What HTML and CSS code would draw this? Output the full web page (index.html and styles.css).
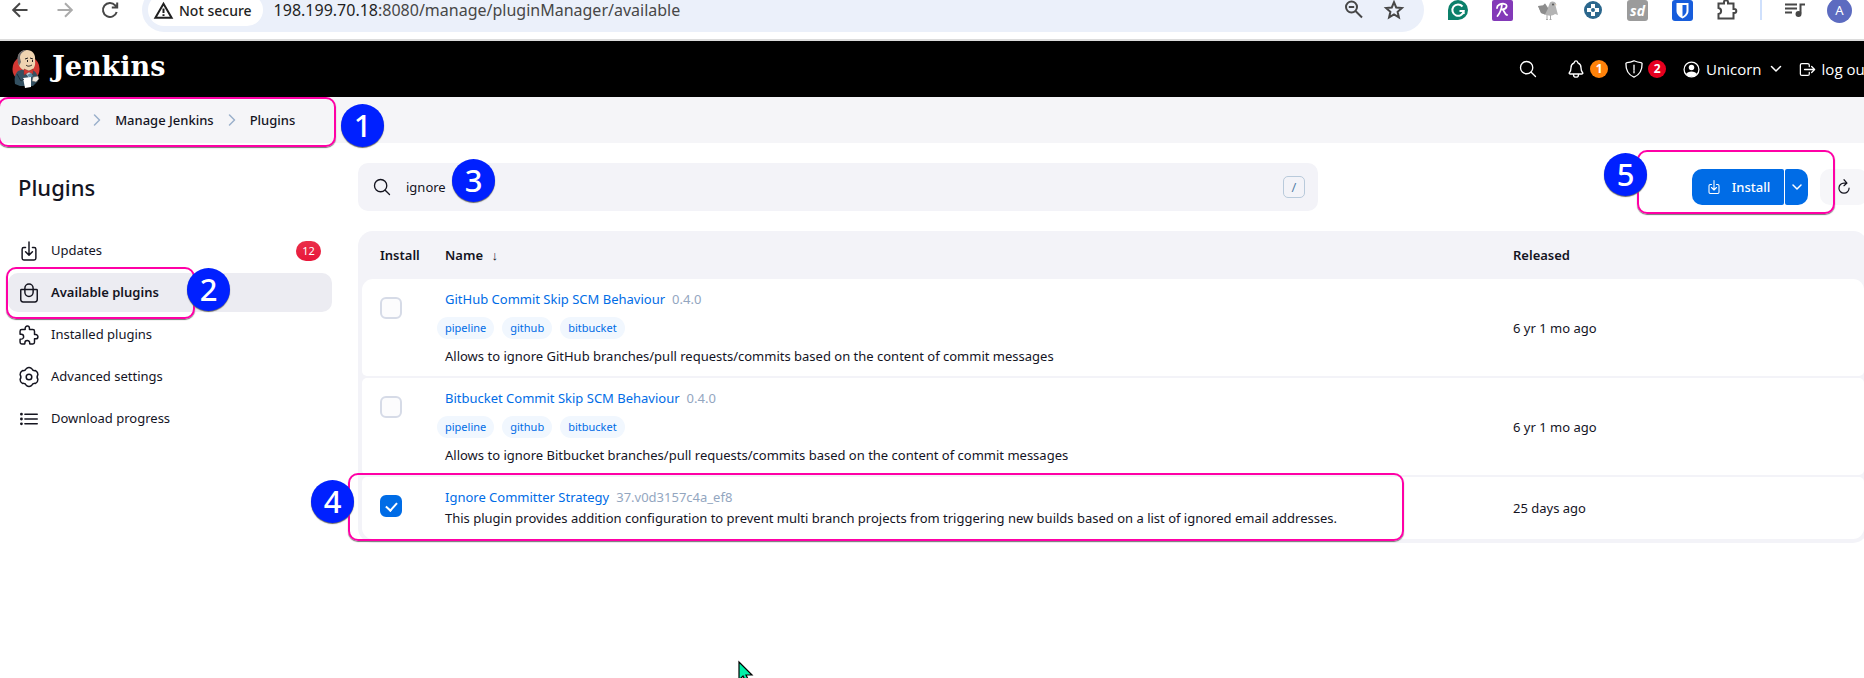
FILE: index.html
```html
<!DOCTYPE html>
<html lang="en">
<head>
<meta charset="utf-8">
<title>Plugins - Jenkins</title>
<link rel="stylesheet" href="styles.css">
</head>
<body>
<div class="toolbar">
  <div class="toolbar-row">
    <div class="nav-buttons">
      <button class="icon-button" aria-label="Back"><svg width="20" height="20" viewBox="0 0 20 20" class="line tool"><path d="M17.500 10H3.500M10 3.300L3.200 10l6.800 6.700"/></svg></button>
      <button class="icon-button faded" aria-label="Forward"><svg width="20" height="20" viewBox="0 0 20 20" class="line tool"><path d="M2.500 10h14M10 3.300l6.800 6.700-6.800 6.700"/></svg></button>
      <button class="icon-button" aria-label="Reload"><svg width="20" height="20" viewBox="0 0 20 20" class="line tool"><path d="M16.700 12a7 7 0 1 1-1.500-6.700L17 7.200M17.200 2.500v5h-5.400"/></svg></button>
    </div>
    <div class="omnibox">
      <button class="security-chip"><svg width="19" height="17" viewBox="0 0 19 17" class="line tool"><path d="M9.500 1.800L17.600 15.700H1.400zM9.500 6.500v4.500M9.500 12.200v1.800"/></svg>Not secure</button>
      <span class="url">198.199.70.18<span class="url-path">:8080/manage/pluginManager/available</span></span>
      <button class="icon-button zoom-button" aria-label="Zoom"><svg width="20" height="20" viewBox="0 0 20 20" class="line tool"><circle cx="7.500" cy="7" r="5.500"/><path d="M11.500 11l6.500 6.500M4.800 7h5.400"/></svg></button>
      <button class="icon-button" aria-label="Bookmark"><svg width="20" height="20" viewBox="0 0 20 20" class="line star"><path d="M10 2.200l2.200 5.300 5.700.5-4.300 3.800 1.300 5.600-4.900-3-4.900 3 1.300-5.600L2.100 8l5.700-.5z"/></svg></button>
    </div>
    <div class="extensions">
      <button class="icon-button" aria-label="Grammar"><svg width="20" height="20" viewBox="0 0 20 20"><path d="M0 20V10a10 10 0 1 1 10 10z" fill="#0b806a"/><path d="M14.500 6.500A5.700 5.700 0 1 0 15.700 11H11.500M15.700 10.500V14" fill="none" stroke="#fff" stroke-width="2"/></svg></button>
      <button class="icon-button" aria-label="R extension"><svg width="21" height="21" viewBox="0 0 21 21"><rect width="21" height="21" rx="2" fill="#8339b8"/><path d="M5 8c0-3 4-4.500 7-4.200 4 .4 3.400 5-1.500 5.700 2 1 2 5 4.500 5.500M10 4.500C9.500 9 8 13 5.500 16" fill="none" stroke="#fff" stroke-width="1.800" stroke-linecap="round"/></svg></button>
      <button class="icon-button" aria-label="Bird extension"><svg width="22" height="20" viewBox="0 0 22 20"><path d="M1 6l5-.5 2-2 3 4 2-5c2-2 5-1 6 1l-.5 2L21 15l-3-1c-3 3-9 1-9 1l-5-2z" fill="#b4b4b4"/><path d="M1 6l5-.5 2-2 3 5-3 6-4-1.500z" fill="#8c8c8c"/><path d="M10 15v4.500M13.500 15v4.500M9 19.500h2M12.500 19.500h2" stroke="#aaa" stroke-width="1"/><circle cx="16" cy="4.500" r="1" fill="#555"/><path d="M18.500 4l1.500 1-1.500.5" fill="#e6c9a8"/></svg></button>
      <button class="icon-button" aria-label="Blue extension"><svg width="20" height="20" viewBox="0 0 20 20"><circle cx="10" cy="10" r="9" fill="#2b678d"/><path d="M8 4h4v4h4v4h-4v4H8v-4H4V8h4z" fill="#fff"/><circle cx="10" cy="10" r="2" fill="#2b678d"/></svg></button>
      <button class="icon-button sd" aria-label="SD extension">sd</button>
      <button class="icon-button" aria-label="Password manager"><svg width="21" height="21" viewBox="0 0 21 21"><rect width="21" height="21" rx="3" fill="#175ddc"/><path d="M4.500 3h12v8c0 4-4 6.500-6 7.500-2-1-6-3.500-6-7.500z" fill="#fff"/><path d="M10.500 5h4v6c0 2.500-2 4.300-4 5.500z" fill="#175ddc"/></svg></button>
      <button class="icon-button" aria-label="Extensions"><svg width="21" height="22" viewBox="0 0 21 22" class="line tool"><path d="M1.500 4.500H7V3.200a2 2 0 0 1 4 0v1.300h5.500V10h.8a2 2 0 0 1 0 4h-.8v5.500h-15V15c3.500-.5 3.500-5.500 0-6z"/></svg></button>
      <span class="divider"></span>
      <button class="icon-button" aria-label="Media"><svg width="20" height="20" viewBox="0 0 20 20" class="line tool"><path d="M0 4.500h12M0 8.500h12M0 12.500h7M15.500 13.500V4.500H20"/><circle cx="13.500" cy="14" r="2" fill="currentColor"/></svg></button>
      <button class="icon-button avatar" aria-label="Profile">A</button>
    </div>
  </div>
</div>

<header class="header">
  <a href="#" class="brand">
    <svg width="28" height="40" viewBox="0 0 28 40">
      <circle cx="14" cy="20" r="13.500" fill="#d33833"/>
      <path d="M3 35c-1-6 0-10 3-13l6-2 8 1c5 2 6 6 6 11l-5 5H8z" fill="#335061"/>
      <path d="M6 11C5 4 10 1 15 1s9 4 8 10c1 7-2 11-7 11S7 19 6 13z" fill="#efd3b0"/>
      <path d="M6 14C4 6 8 1 14 1c-3 2-6 3-6 8l1 4-2 4z" fill="#6d6b6d"/>
      <path d="M13 10l3-1M18 9l3 1M14 16c2 2 4 1 6 0" stroke="#221f1f" fill="none"/>
      <path d="M15 12h1M20 12h1" stroke="#221f1f" stroke-width="2"/>
      <path d="M12 22l5 7 4-7z" fill="#c9d3da"/>
      <path d="M12 20l5 2 4-2v5l-4-2-5 3z" fill="#d33833" stroke="#81302b" stroke-width=".5"/>
      <path d="M15 26l4-2 2 3-3 2z" fill="#5b8aa3"/>
      <path d="M11 29l8-1v10l-6 1z" fill="#fff"/>
      <path d="M21 28l5-1 1 3-3 3-4-1z" fill="#efe8df" stroke="#555" stroke-width=".5"/>
      <path d="M5 25l4 7 3-2" fill="none" stroke="#1d2f3a"/>
    </svg>
    <span class="wordmark">Jenkins</span>
  </a>
  <div class="header-tools">
    <button class="head-button search-tool" aria-label="Search"><svg width="20" height="20" viewBox="0 0 512 512" class="line ion"><circle cx="221" cy="221" r="157"/><path d="M338 338l110 110"/></svg></button>
    <button class="head-button bell-tool" aria-label="Notifications"><svg width="20" height="20" viewBox="0 0 512 512" class="line ion"><path d="M427.700 351.400C403 321 384 305 384 222.500 384 147 345.500 120 313.700 107c-4.200-1.700-8.200-5.700-9.500-10C298.600 78.200 283.200 48 256 48s-42.600 30.200-48.100 49c-1.300 4.400-5.300 8.300-9.500 10C166.600 120.100 128 147 128 222.500 128 305 109 321 84.300 351.400 74 364 83.200 384 101.200 384h309.700c18 0 27-20.100 16.800-32.600zM320 384v16a64 64 0 01-128 0v-16"/></svg><span class="count orange">1</span></button>
    <button class="head-button shield-tool" aria-label="Security warnings"><svg width="20" height="20" viewBox="0 0 512 512" class="line ion"><path d="M463 112c-4-12-14-19-28-21-95-12-125-25-168-42-8-2-14-2-22 0-44 17-73 30-168 42-14 2-24 9-28 21-5 210 75 300 207 352 132-52 212-142 207-352zM256 155v130M256 320v32"/></svg><span class="count red">2</span></button>
    <a href="#" class="head-link user"><svg width="19" height="19" viewBox="0 0 512 512"><circle cx="256" cy="256" r="200" fill="none" stroke="currentColor" stroke-width="34"/><circle cx="256" cy="205" r="74" fill="currentColor"/><path d="M110 375c40-90 252-90 292 0-60 90-232 90-292 0z" fill="currentColor"/></svg>Unicorn</a>
    <button class="head-button caret" aria-label="User menu"><svg width="12" height="12" viewBox="0 0 12 12" class="line"><path d="M1.500 3.500L6 8l4.500-4.500"/></svg></button>
    <a href="#" class="head-link"><svg width="19" height="19" viewBox="0 0 512 512" class="line ion"><path d="M304 336v40a40 40 0 01-40 40H104a40 40 0 01-40-40V136a40 40 0 0140-40h152c22 0 48 18 48 40v40M368 336l80-80-80-80M176 256h256"/></svg>log out</a>
  </div>
</header>

<nav class="breadcrumbs" aria-label="Breadcrumb">
  <a href="#">Dashboard</a>
  <svg width="8" height="12" viewBox="0 0 8 12" class="line"><path d="M1.500 1l5 5-5 5"/></svg>
  <a href="#">Manage Jenkins</a>
  <svg width="8" height="12" viewBox="0 0 8 12" class="line"><path d="M1.500 1l5 5-5 5"/></svg>
  <a href="#">Plugins</a>
</nav>

<div class="page">
  <aside class="sidebar">
    <h1>Plugins</h1>
    <nav class="tasks" aria-label="Plugin manager">
      <a href="#" class="task"><svg width="22" height="22" viewBox="0 0 512 512" class="line ion"><path d="M336 176h40a40 40 0 0140 40v208a40 40 0 01-40 40H136a40 40 0 01-40-40V216a40 40 0 0140-40h40M176 272l80 80 80-80M256 48v288"/></svg>Updates<span class="badge">12</span></a>
      <a href="#" class="task active"><svg width="22" height="22" viewBox="0 0 512 512" class="line ion"><path d="M80 176a16 16 0 00-16 16v216c0 30.240 25.760 56 56 56h272c30.240 0 56-24.510 56-54.750V192a16 16 0 00-16-16zM160 176v-32a96 96 0 01192 0v32M160 176v64a96 96 0 00192 0v-64"/></svg>Available plugins</a>
      <a href="#" class="task"><svg width="22" height="22" viewBox="0 0 512 512" class="line ion"><path d="M413.660 246.100H386a2 2 0 01-2-2v-77.240A38.860 38.860 0 00345.140 128H267.900a2 2 0 01-2-2V98.340c0-27.140-21.500-49.860-48.640-50.330a49.530 49.530 0 00-50.400 49.510V126a2 2 0 01-2 2H87.620A39.740 39.740 0 0048 167.620V238a2 2 0 002 2h26.910c29.370 0 53.680 25.480 54.090 54.850.420 29.870-23.510 57.150-53.290 57.150H50a2 2 0 00-2 2v70.380A39.740 39.740 0 0087.620 464H158a2 2 0 002-2v-20.930c0-30.280 24.750-56.350 55-57.060 30.100-.700 57 20.310 57 50.280V462a2 2 0 002 2h71.140A38.860 38.860 0 00384 425.140v-78a2 2 0 012-2h28.480c27.630 0 49.520-22.670 49.520-50.400s-23.200-48.640-50.340-48.640z"/></svg>Installed plugins</a>
      <a href="#" class="task"><svg width="22" height="22" viewBox="-1 -1 22 22" class="line gear"><path d="M7.600 1.300Q10 -.2 12.400 1.300Q13.600 4 16.600 3.600Q19 5 18.900 7.600Q17.300 10 18.900 12.400Q19 15 16.600 16.400Q13.600 16 12.400 18.700Q10 20.200 7.600 18.700Q6.400 16 3.400 16.400Q1 15 1.100 12.400Q2.700 10 1.100 7.600Q1 5 3.400 3.600Q6.400 4 7.600 1.300z"/><circle cx="10" cy="10" r="2.800"/></svg>Advanced settings</a>
      <a href="#" class="task"><svg width="22" height="22" viewBox="0 0 512 512" class="line ion"><path d="M160 144h288M160 256h288M160 368h288"/><circle cx="80" cy="144" r="16"/><circle cx="80" cy="256" r="16"/><circle cx="80" cy="368" r="16"/></svg>Download progress</a>
    </nav>
  </aside>

  <main class="main">
    <div class="app-bar">
      <label class="search">
        <svg width="20" height="20" viewBox="0 0 512 512" class="line ion"><circle cx="221" cy="221" r="157"/><path d="M338 338l110 110"/></svg>
        <input type="search" value="ignore" aria-label="Search available plugins">
        <kbd>/</kbd>
      </label>
      <div class="actions">
        <div class="split">
          <button class="install"><svg width="16" height="16" viewBox="0 0 512 512" class="line ion"><path d="M336 176h40a40 40 0 0140 40v208a40 40 0 01-40 40H136a40 40 0 01-40-40V216a40 40 0 0140-40h40M176 272l80 80 80-80M256 48v288"/></svg>Install</button>
          <button class="more" aria-label="More install options"><svg width="12" height="12" viewBox="0 0 12 12" class="line"><path d="M2 4l4 4 4-4"/></svg></button>
        </div>
        <button class="refresh" aria-label="Refresh"><svg width="18" height="18" viewBox="0 0 512 512" class="line ion"><path d="M400 288a144 144 0 11-144-144h70M256 50l85 94-85 76"/></svg></button>
      </div>
    </div>

    <div class="table-frame">
      <table>
        <thead>
          <tr><th class="col-install">Install</th><th>Name <span class="sort">↓</span></th><th class="col-released">Released</th></tr>
        </thead>
        <tbody>
          <tr>
            <td class="pick"><input type="checkbox" aria-label="GitHub Commit Skip SCM Behaviour"></td>
            <td>
              <div><a href="#">GitHub Commit Skip SCM Behaviour</a><span class="version">0.4.0</span></div>
              <div class="tags"><a href="#">pipeline</a><a href="#">github</a><a href="#">bitbucket</a></div>
              <div>Allows to ignore GitHub branches/pull requests/commits based on the content of commit messages</div>
            </td>
            <td class="released">6 yr 1 mo ago</td>
          </tr>
          <tr>
            <td class="pick"><input type="checkbox" aria-label="Bitbucket Commit Skip SCM Behaviour"></td>
            <td>
              <div><a href="#">Bitbucket Commit Skip SCM Behaviour</a><span class="version">0.4.0</span></div>
              <div class="tags"><a href="#">pipeline</a><a href="#">github</a><a href="#">bitbucket</a></div>
              <div>Allows to ignore Bitbucket branches/pull requests/commits based on the content of commit messages</div>
            </td>
            <td class="released">6 yr 1 mo ago</td>
          </tr>
          <tr>
            <td class="pick"><input type="checkbox" checked aria-label="Ignore Committer Strategy"></td>
            <td>
              <div><a href="#">Ignore Committer Strategy</a><span class="version">37.v0d3157c4a_ef8</span></div>
              <div>This plugin provides addition configuration to prevent multi branch projects from triggering new builds based on a list of ignored email addresses.</div>
            </td>
            <td class="released">25 days ago</td>
          </tr>
        </tbody>
      </table>
    </div>
  </main>
</div>

<div class="mark mark-1"></div>
<div class="mark mark-2"></div>
<div class="mark mark-4"></div>
<div class="mark mark-5"></div>
<span class="step step-1">1</span>
<span class="step step-2">2</span>
<span class="step step-3">3</span>
<span class="step step-4">4</span>
<span class="step step-5">5</span>
<svg class="cursor" width="15" height="22" viewBox="0 0 15 22"><path d="M1 1v18l4-4 3 6 3-1-3-6h6z" fill="#00f0a8" stroke="#000" stroke-width="1.200"/></svg>
</body>
</html>
```

FILE: styles.css
```css
* { box-sizing: border-box; }

body {
  position: relative;
  margin: 0;
  min-height: 100vh;
  overflow: hidden;
  background: #fff;
  color: #14141f;
  font: 13px/21px "Noto Sans", "Open Sans", sans-serif;
  white-space: nowrap;
}

a { color: inherit; text-decoration: none; }

button {
  padding: 0;
  border: 0;
  background: none;
  color: inherit;
  font: inherit;
}

svg { display: block; flex: none; overflow: visible; }
.line { fill: none; stroke: currentColor; stroke-width: 1.5; stroke-linecap: round; stroke-linejoin: round; }
.ion { stroke-width: 34; }
.tool { stroke-width: 2; stroke-linecap: butt; stroke-linejoin: miter; }
.star { stroke-width: 2; stroke-linejoin: miter; }

/* Browser toolbar */
.toolbar { height: 41px; overflow: hidden; border-bottom: 2px solid #dcdcdc; }
.toolbar-row { display: flex; align-items: center; height: 44px; margin-top: -12px; color: #474747; }
.icon-button { display: grid; place-items: center; flex: none; }
.nav-buttons { display: flex; gap: 25px; padding-left: 10px; width: 142px; }
.faded { color: #ababab; }
.omnibox {
  display: flex;
  flex: 1;
  align-items: center;
  height: 44px;
  padding: 0 20px 0 6px;
  border-radius: 22px;
  background: #ebf0fa;
}
.security-chip {
  display: flex;
  align-items: center;
  gap: 6px;
  height: 32px;
  padding: 0 11px 0 6px;
  border-radius: 16px;
  background: #fff;
  color: #1f1f1f;
  font-size: 14px;
  font-weight: 500;
}
.url { flex: 1; margin-left: 11px; color: #1f1f1f; font-size: 16px; }
.url-path { color: #474747; }
.zoom-button { margin-right: 20px; }
.extensions { display: flex; align-items: center; gap: 24px; padding: 0 12px 0 24px; }
.sd {
  width: 21px;
  height: 21px;
  border-radius: 3px;
  background: #9b9b9b;
  color: #fff;
  font: italic bold 14px/21px "Open Sans", sans-serif;
}
.divider { width: 2px; height: 20px; margin: 0 -1px 0 -2px; background: #cfe0fc; }
.avatar { width: 25px; height: 25px; margin-left: -2px; border-radius: 50%; background: #5c6bc0; color: #fff; font-size: 13px; }

/* Jenkins header */
.header {
  display: flex;
  justify-content: space-between;
  height: 56px;
  margin-right: -6px;
  padding-left: 12px;
  background: #000;
  color: #fff;
}
.brand { display: flex; align-items: center; gap: 12px; }
.wordmark { padding-bottom: 4px; font: bold 27px/36px "DejaVu Serif", serif; }
.header-tools { display: flex; align-items: center; font-family: "Open Sans", sans-serif; font-size: 15px; }
.head-button { display: flex; align-items: center; gap: 4px; }
.head-link { display: flex; align-items: center; gap: 5px; }
.search-tool { margin-right: 28px; }
.bell-tool { margin-right: 16px; }
.shield-tool { margin-right: 16px; }
.user { margin-right: 8px; }
.caret { margin-right: 16px; }
.count { width: 18px; height: 18px; border-radius: 50%; font-size: 12px; font-weight: 700; line-height: 18px; text-align: center; }
.orange { background: #ff820a; }
.red { background: #e6001f; }

.breadcrumbs {
  display: flex;
  align-items: center;
  gap: 14px;
  height: 46px;
  padding-left: 11px;
  background: #f5f5f8;
  font-weight: 500;
}
.breadcrumbs svg { color: #9bb0cb; }

/* Page */
.page { display: flex; gap: 26px; padding: 20px 0 0 8px; }
.sidebar { flex: none; width: 324px; }
h1 { margin: 0 0 22px; padding: 10px 10px 8px; font-size: 22px; line-height: 28px; font-weight: 500; }
.tasks { display: flex; flex-direction: column; gap: 3px; }
.task {
  display: flex;
  align-items: center;
  gap: 11px;
  height: 39px;
  padding: 0 11px 0 10px;
  border-radius: 10px;
}
.active { background: #ececf2; font-weight: 600; }
.badge {
  width: 25px;
  margin-left: auto;
  border-radius: 10px;
  background: linear-gradient(#ea2f4a, #e8173a);
  color: #fff;
  font-size: 11px;
  line-height: 20px;
  text-align: center;
}

.main { flex: 1; min-width: 0; margin-right: -4px; }
.app-bar { display: flex; align-items: center; justify-content: space-between; margin-bottom: 20px; }
.search {
  display: flex;
  flex: 0 1 960px;
  align-items: center;
  gap: 14px;
  height: 48px;
  padding: 0 13px 0 14px;
  border-radius: 10px;
  background: #f3f3f8;
}
.search input {
  flex: 1;
  min-width: 0;
  padding: 0;
  border: 0;
  outline: 0;
  background: none;
  color: inherit;
  font: inherit;
  appearance: none;
}
kbd {
  width: 22px;
  border: 1px solid #b9cadb;
  border-radius: 5px;
  color: #4d77a3;
  font: 13px/20px "Open Sans", sans-serif;
  text-align: center;
}
.actions { display: flex; gap: 12px; }
.split { display: flex; gap: 1px; color: #fff; }
.install, .more, .refresh { display: flex; align-items: center; justify-content: center; height: 36px; }
.install { gap: 10px; width: 92px; border-radius: 10px 2px 2px 10px; background: #006ce6; font-weight: 500; }
.more { width: 23px; border-radius: 2px 10px 10px 2px; background: #006ce6; }
.refresh { width: 48px; border-radius: 10px; background: #f6f6f9; }

.table-frame { padding: 0 4px 2px; border-radius: 15px; background: #f3f3f8; }
table { width: 100%; border-spacing: 0 2px; table-layout: fixed; }
th { height: 44px; padding: 0; font-weight: 600; text-align: left; }
.col-install { width: 83px; padding-left: 18px; }
.col-released { width: 351px; }
.sort { margin-left: 5px; font-weight: 400; }
td { padding: 10px 0 9px; background: #fff; vertical-align: middle; }
td:first-child { border-radius: 5px 0 0 5px; }
td:last-child { border-radius: 0 5px 5px 0; }
tbody tr:first-child td:first-child { border-top-left-radius: 11px; }
tbody tr:first-child td:last-child { border-top-right-radius: 11px; }
tbody tr:last-child td:first-child { border-bottom-left-radius: 11px; }
tbody tr:last-child td:last-child { border-bottom-right-radius: 11px; }
tbody tr:last-child td { padding-bottom: 10px; }
td.pick { padding: 18px 0 0 18px; vertical-align: top; }
td a { color: #006ce6; }
.version { margin-left: 7px; color: #93a6bf; }
.tags { display: flex; gap: 8px; margin: 7px 0 7px -8px; }
.tags a { padding: 0 8px; border-radius: 11px; background: #f1f7fe; font-size: 11px; line-height: 22px; }

input[type="checkbox"] {
  display: block;
  width: 22px;
  height: 22px;
  margin: 0;
  appearance: none;
  border: 2px solid #d6dbe7;
  border-radius: 6px;
  background: #fcfcfd;
}
input[type="checkbox"]:checked { display: grid; place-items: center; border-color: #006ce6; background: #006ce6; }
input[type="checkbox"]:checked::before {
  content: "";
  width: 5px;
  height: 9px;
  margin-bottom: 2px;
  border: solid #fff;
  border-width: 0 2px 2px 0;
  transform: rotate(42deg);
}

/* Tutorial annotations laid over the page */
.mark { position: absolute; border: 2px solid #ff00a6; border-radius: 10px; box-shadow: 0 1px 1px #777; }
.mark-1 { left: -2px; top: 97px; width: 338px; height: 50px; }
.mark-2 { left: 6px; top: 267px; width: 189px; height: 52px; }
.mark-4 { left: 348px; top: 473px; width: 1056px; height: 68px; }
.mark-5 { right: 29px; top: 150px; width: 198px; height: 64px; }
.step {
  position: absolute;
  width: 43px;
  height: 43px;
  border-radius: 50%;
  background: #0020ff;
  box-shadow: 0 1px 1px #666;
  color: #fff;
  font: 500 31px/43px "Noto Sans", sans-serif;
  text-align: center;
}
.step-1 { left: 341px; top: 104px; }
.step-2 { left: 187px; top: 268px; }
.step-3 { left: 452px; top: 159px; }
.step-4 { left: 311px; top: 480px; }
.step-5 { right: 217px; top: 153px; }
.cursor { position: absolute; left: 738px; top: 661px; }
```
